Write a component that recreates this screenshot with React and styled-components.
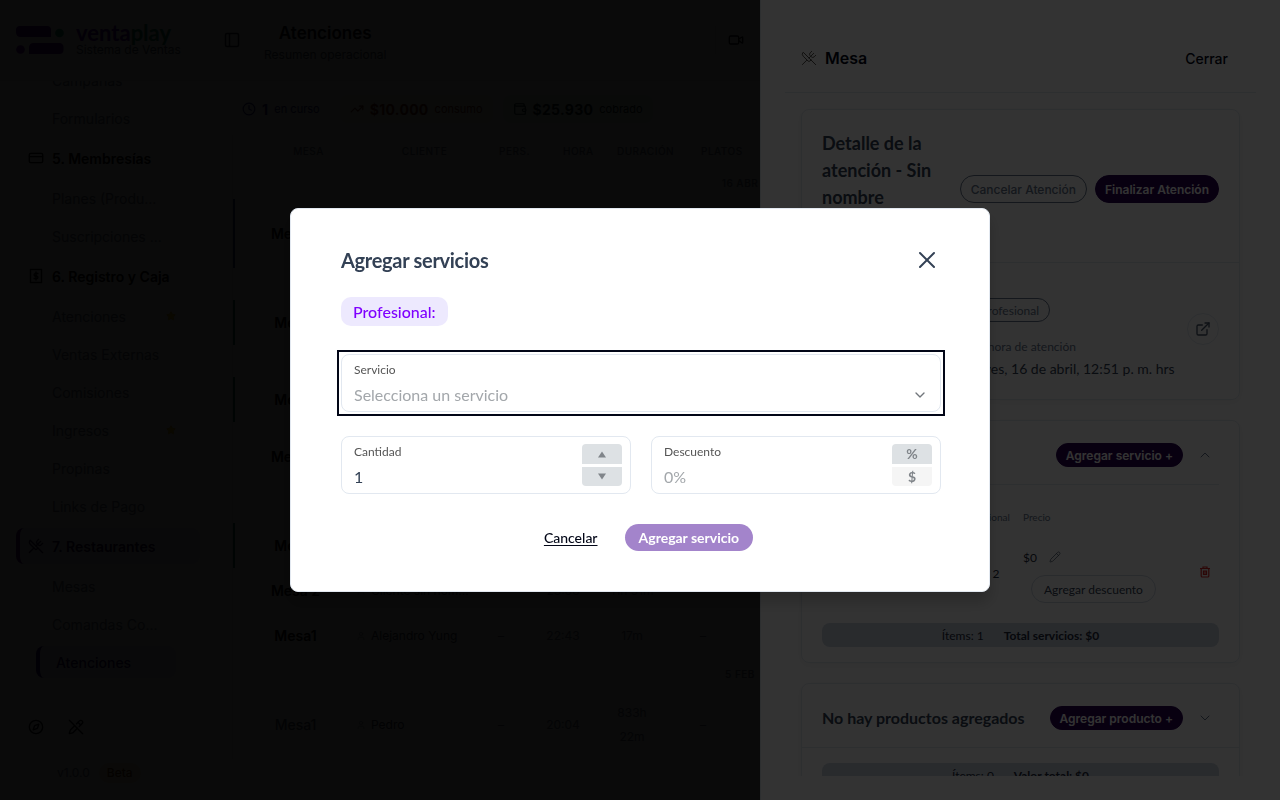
import React, { useState } from "react";
import styled, { createGlobalStyle } from "styled-components";
import {
  Calendar,
  ChevronDown,
  ChevronUp,
  Clock,
  Compass,
  CreditCard,
  ExternalLink,
  Pencil,
  PencilOff,
  Star,
  TrendingUp,
  User,
  UtensilsCrossed,
  Video,
  Wallet,
  X,
} from "lucide-react";

const GlobalStyle = createGlobalStyle`
  * {
    box-sizing: border-box;
  }
  body {
    margin: 0;
    overflow: hidden;
    background: #ffffff;
    color: #020617;
    font-family: "Inter", sans-serif;
    font-size: 14px;
  }
  h1, h2, h3, p, ul {
    margin: 0;
    padding: 0;
  }
  button, input, select {
    font-family: inherit;
    color: inherit;
    margin: 0;
  }
  svg {
    flex-shrink: 0;
  }
`;

/* ---------- page ---------- */

const Page = styled.div`
  display: grid;
  grid-template-rows: 81px minmax(0, 1fr);
  height: 100vh;
`;

const TopBar = styled.header`
  display: flex;
  align-items: center;
  border-bottom: 1px solid #e2e8f0;
  padding-left: 16px;
`;

const Brand = styled.a`
  display: flex;
  align-items: center;
  gap: 12px;
  width: 208px;
  color: inherit;
  text-decoration: none;
`;

const BrandName = styled.span`
  display: block;
  font-family: "Lato", sans-serif;
  font-size: 22px;
  line-height: 20px;
  font-weight: 700;
  color: ${(props) => props.color};
`;

const BrandRow = styled.span`
  display: flex;
`;

const Tagline = styled.small`
  display: block;
  font-size: 12px;
  line-height: 14px;
  color: #475569;
`;

const BareButton = styled.button`
  display: inline-flex;
  align-items: center;
  justify-content: center;
  padding: 0;
  border: 0;
  background: transparent;
`;

const PageHeading = styled.div`
  flex: 1;
  padding: 6px 0 0 24px;
`;

const HeadingBlock = styled.div`
  display: inline-block;
  text-align: center;
`;

const PageTitle = styled.h1`
  font-size: 17px;
  line-height: 24px;
  font-weight: 600;
`;

const PageSubtitle = styled.p`
  font-size: 12px;
  line-height: 20px;
  color: #475569;
`;

const TopActions = styled.div`
  display: flex;
  align-items: center;
  height: 28px;
  width: 565px;
  padding-left: 12px;
  border-left: 1px solid #e2e8f0;
`;

const Columns = styled.div`
  display: grid;
  grid-template-columns: 216px minmax(0, 1fr);
  min-height: 0;
`;

const Sidebar = styled.aside`
  display: flex;
  flex-direction: column;
  min-height: 0;
`;

const NavScroll = styled.nav`
  flex: 1;
  min-height: 0;
  overflow: hidden;
`;

const NavList = styled.ul`
  display: flex;
  flex-direction: column;
  gap: 6px;
  margin-top: -17px;
  padding: 0 16px;
  list-style: none;
`;

const NavGroup = styled.a`
  display: flex;
  align-items: center;
  gap: 8px;
  height: 36px;
  padding-left: ${(props) => (props.$active ? "8px" : "12px")};
  border-left: ${(props) => (props.$active ? "4px solid #4c0080" : "0")};
  border-radius: 8px;
  background: ${(props) => (props.$active ? "#f3f0fa" : "transparent")};
  color: ${(props) => (props.$active ? "#1e004d" : "#000000")};
  font-weight: 600;
  text-decoration: none;
`;

const NavLink = styled.a`
  display: flex;
  align-items: center;
  justify-content: space-between;
  height: 32px;
  margin: 0 24px 0 20px;
  padding-left: 16px;
  border-left: ${(props) => (props.$active ? "4px solid #1e0080" : "0")};
  border-radius: 8px;
  background: ${(props) => (props.$active ? "#f3f0fa" : "transparent")};
  color: ${(props) => (props.$active ? "#1e0070" : "#64748b")};
  font-weight: ${(props) => (props.$active ? 500 : 400)};
  text-decoration: none;
  white-space: nowrap;
`;

const SidebarTools = styled.div`
  display: flex;
  gap: 24px;
  padding: 0 28px;
`;

const Version = styled.div`
  display: flex;
  align-items: center;
  gap: 9px;
  padding: 28px 57px 17px;
  font-size: 12px;
  line-height: 20px;
  color: #64748b;
`;

const Beta = styled.span`
  padding: 0 8px;
  border-radius: 10px;
  background: #fef3c7;
  color: #78350f;
  font-weight: 500;
`;

const Main = styled.main`
  padding: 14px 34px 0 16px;
`;

const Chips = styled.div`
  display: flex;
  gap: 10px;
`;

const Chip = styled.div`
  display: flex;
  align-items: center;
  gap: 6px;
  height: 28px;
  padding: 0 10px;
  border-radius: 8px;
  background: ${(props) => props.$bg};
  color: ${(props) => props.$fg};
  font-size: 11px;

  strong {
    font-size: 14px;
    letter-spacing: 0.3px;
  }
`;

const Table = styled.table`
  width: 100%;
  border-collapse: collapse;
  table-layout: fixed;
  color: #64748b;
  font-size: 12px;
  line-height: 24px;
  text-align: center;

  th {
    height: 32px;
    padding: 0 0 0 27px;
    font-size: 10px;
    font-weight: 500;
    letter-spacing: 0.5px;
    white-space: nowrap;
    text-transform: uppercase;
    color: #64748b;
  }
  td {
    padding: 0;
  }
`;

const TableWrap = styled.div`
  margin-top: 12px;
  border-left: 1px solid #e2e8f0;
`;

const GroupRow = styled.tr`
  height: 32px;
  font-size: 10px;
  font-weight: 600;
  letter-spacing: 0.5px;
  color: #64748b;
`;

const Row = styled.tr`
  height: ${(props) => (props.$tall ? 69 : 45)}px;

  td:first-child {
    border-left: 2px solid ${(props) => props.$accent || "transparent"};
    color: ${(props) => (props.$muted ? "#475569" : "#000000")};
    font-size: 14px;
    font-weight: ${(props) => (props.$muted ? 500 : 600)};
  }
`;

const Client = styled.span`
  display: flex;
  align-items: center;
  gap: 5px;
  color: #334155;
  white-space: nowrap;

  svg {
    color: #94a3b8;
  }
`;

/* ---------- layers ---------- */

const Backdrop = styled.div`
  position: fixed;
  inset: 0;
  background: rgba(0, 0, 0, 0.8);
`;

const ModalLayer = styled(Backdrop)`
  display: flex;
  align-items: center;
  justify-content: center;
  font-family: "Lato", sans-serif;
`;

/* ---------- side panel ---------- */

const Panel = styled.section`
  position: fixed;
  top: 0;
  right: 0;
  bottom: 0;
  display: flex;
  flex-direction: column;
  width: 520px;
  max-width: 100%;
  padding: 24px;
  border-left: 1px solid #e2e8f0;
  background: #ffffff;
`;

const PanelHeader = styled.header`
  display: flex;
  align-items: center;
  justify-content: space-between;
  height: 69px;
  padding: 0 28px 0 16px;
  border-bottom: 1px solid #e2e8f0;
`;

const PanelTitle = styled.h2`
  display: flex;
  align-items: center;
  gap: 8px;
  font-size: 16px;
  font-weight: 600;

  svg {
    color: #57534e;
  }
`;

const CloseButton = styled(BareButton)`
  font-size: 14px;
  font-weight: 500;
`;

const PanelBody = styled.div`
  display: flex;
  flex: 1;
  flex-direction: column;
  gap: 20px;
  min-height: 0;
  overflow: hidden;
  padding: 16px 16px 0;
  font-family: "Lato", sans-serif;

  > * {
    flex-shrink: 0;
  }
`;

const Card = styled.article`
  border: 1px solid #e2e8f0;
  border-radius: 8px;
  box-shadow: 0 2px 8px rgba(0, 0, 0, 0.06);
`;

const DetailHead = styled.header`
  display: flex;
  align-items: center;
  gap: 8px;
  height: 153px;
  padding: 20px 20px 14px;
  border-bottom: 1px solid #e2e8f0;
`;

const DetailTitle = styled.h3`
  flex: 1;
  align-self: flex-start;
  font-size: 18px;
  line-height: 27px;
  font-weight: 700;
  color: #334155;
`;

const PillButton = styled.button`
  height: ${(props) => (props.$small ? 24 : 28)}px;
  padding: 0 ${(props) => (props.$outline ? 10 : 9)}px;
  border: 1px solid ${(props) => (props.$outline ? "#64748b" : "#2a0053")};
  border-radius: 14px;
  background: ${(props) => (props.$outline ? "transparent" : "#2a0053")};
  color: ${(props) => (props.$outline ? "#64748b" : "#ffffff")};
  font-family: "Inter", sans-serif;
  font-size: 12px;
  font-weight: ${(props) => (props.$outline ? 500 : 600)};
  white-space: nowrap;
`;

const DetailBody = styled.div`
  display: flex;
  align-items: center;
  justify-content: space-between;
  height: 136px;
  padding: 0 20px;
`;

const DetailFields = styled.div`
  display: grid;
  grid-template-columns: 123px auto;
  margin-top: 16px;
  color: #334155;
`;

const DetailLabel = styled.p`
  margin-top: 14px;
  font-size: 12px;
  line-height: 22px;
  color: #64748b;
`;

const DetailValue = styled.p`
  display: flex;
  align-items: center;
  gap: 4px;
  font-size: 14px;
  line-height: 22px;
`;

const Tag = styled.span`
  display: inline-flex;
  align-items: center;
  height: 24px;
  padding: 0 10px;
  border: 1px solid #64748b;
  border-radius: 12px;
  font-size: 12px;
  color: #64748b;
`;

const RoundLink = styled.a`
  display: flex;
  align-items: center;
  justify-content: center;
  width: 32px;
  height: 32px;
  margin-bottom: 4px;
  border: 1px solid #e2e8f0;
  border-radius: 50%;
  color: #475569;
`;

const SectionHead = styled.header`
  display: flex;
  align-items: center;
  justify-content: space-between;
  height: 64px;
  margin: ${(props) => (props.$inset ? "0 20px" : "0")};
  padding: ${(props) => (props.$inset ? "5px 0 0" : "5px 20px 0")};
  border-bottom: 1px solid #e2e8f0;
`;

const SectionTitle = styled.h3`
  font-size: 16px;
  line-height: 20px;
  font-weight: 700;
  color: #334155;
`;

const SectionActions = styled.div`
  display: flex;
  align-items: center;
  gap: 14px;
`;

const Toggle = styled(BareButton)`
  width: 16px;
  height: 16px;
  margin-right: 6px;
  color: #64748b;
`;

const ItemsTable = styled.table`
  width: calc(100% - 40px);
  margin: 18px 20px 0;
  border-collapse: collapse;
  table-layout: fixed;
  text-align: left;
  font-size: 12px;
  color: #1e293b;

  th {
    height: 28px;
    padding: 0;
    font-size: 10px;
    font-weight: 400;
    color: #64748b;
  }
  td {
    height: 84px;
    padding: 0;
  }
`;

const Price = styled.div`
  display: flex;
  align-items: center;
  gap: 12px;
  height: 36px;
  font-size: 12px;
`;

const DiscountButton = styled.button`
  display: block;
  height: 28px;
  margin: 0 0 4px 8px;
  padding: 0 12px;
  border: 1px solid #cbd5e1;
  border-radius: 14px;
  background: transparent;
  color: #334155;
  font-family: "Lato", sans-serif;
  font-size: 12px;
`;

const Totals = styled.footer`
  display: flex;
  align-items: center;
  justify-content: center;
  gap: 20px;
  height: 24px;
  margin: ${(props) => props.$top}px 20px 15px;
  border-radius: 8px;
  background: #cbd5e1;
  color: #1e293b;
  font-size: 12px;
`;

/* ---------- modal ---------- */

const Modal = styled.form`
  width: 700px;
  max-width: 100%;
  padding: 37px 48px 40px 50px;
  border: 1px solid #e2e8f0;
  border-radius: 8px;
  background: #ffffff;
  box-shadow: 0 10px 15px rgba(0, 0, 0, 0.2);
`;

const ModalHead = styled.header`
  display: flex;
  align-items: center;
  justify-content: space-between;
  height: 28px;
  color: #334155;
`;

const ModalTitle = styled.h2`
  font-size: 20px;
  line-height: 28px;
  font-weight: 700;
  letter-spacing: -0.3px;
`;

const Badge = styled.p`
  display: inline-block;
  margin: 23px 0 28px;
  padding: 0 12px;
  border-radius: 10px;
  background: #ede9fe;
  color: #7f00ff;
  font-size: 16px;
  font-weight: 500;
  line-height: 29px;
  vertical-align: top;
`;

const FocusFrame = styled.div`
  &:focus-within {
    outline: 2px solid #020617;
    outline-offset: 2px;
  }
`;

const Field = styled.div`
  display: flex;
  align-items: center;
  height: 58px;
  padding: 0 8px 0 12px;
  border: 1px solid #e2e8f0;
  border-radius: 8px;
`;

const FieldMain = styled.div`
  flex: 1;
  min-width: 0;
  padding-top: 6px;

  label {
    display: block;
    font-size: 12px;
    line-height: 16px;
    color: #555555;
  }
  input,
  select {
    display: block;
    width: 100%;
    height: 32px;
    padding: 0;
    border: 0;
    outline: 0;
    appearance: none;
    background: transparent;
    color: #334155;
    font-size: 16px;
  }
  select,
  input::placeholder {
    color: #a3a7ab;
    opacity: 1;
  }
`;

const SelectIcon = styled(ChevronDown)`
  align-self: flex-end;
  margin: 0 4px 8px;
  color: #71767b;
  pointer-events: none;
`;

const FieldRow = styled.div`
  display: grid;
  grid-template-columns: 1fr 1fr;
  gap: 20px;
  margin-top: 24px;
`;

const Switcher = styled.div`
  display: grid;
  grid-template-rows: 20px 19px;
  gap: 3px;
  width: 40px;
`;

const SwitchButton = styled.button`
  display: flex;
  align-items: center;
  justify-content: center;
  padding: 0;
  border: 0;
  background: ${(props) => (props.$off ? "#f5f5f5" : "#dde1e4")};
  color: #80858a;
  font-size: 14px;
  line-height: 18px;
  font-weight: 700;

  &:first-child {
    border-radius: 4px 4px 0 0;
  }
  &:last-child {
    border-radius: 0 0 4px 4px;
  }
`;

const ModalActions = styled.footer`
  display: flex;
  justify-content: center;
  gap: 27px;
  margin: 30px 0 0 15px;
`;

const CancelButton = styled(BareButton)`
  color: #020617;
  font-size: 14px;
  font-weight: 500;
  text-decoration: underline;
  text-underline-offset: 2px;
`;

const SubmitButton = styled.button`
  height: 27px;
  padding: 0 14px;
  border: 0;
  border-radius: 14px;
  background: #a384cb;
  color: #ffffff;
  font-size: 14px;
  font-weight: 700;
`;

const Logo = () => (
  <svg width="48" height="28" viewBox="0 0 48 28">
    <path d="M4 0h27q4 0 4 4v7H5q-5 0-5-5V4q0-4 4-4Z" fill="#4b0099" />
    <circle cx="43.5" cy="7" r="4.3" fill="#00a878" />
    <circle cx="4.5" cy="23.5" r="4.3" fill="#7500bd" />
    <path d="M18 17h25q4.500 0 4.500 4.500v2q0 4.500-4.500 4.500H13v-6q0-5 5-5Z" fill="#4b0099" />
  </svg>
);

const PanelIcon = () => (
  <svg width="16" height="16" viewBox="0 0 16 16" fill="none" stroke="#1e293b" strokeWidth="1.500">
    <rect x="1.500" y="1.500" width="13" height="13" rx="1.500" />
    <path d="M5.500 1.500v13" />
  </svg>
);

const CashIcon = () => (
  <svg width="16" height="16" viewBox="0 0 16 16" fill="none" stroke="currentColor" strokeWidth="1.300">
    <rect x="2.500" y="1.500" width="11" height="13" />
    <path d="M8 3.500v9M10.500 5.500H7a1.300 1.300 0 0 0 0 2.500h2a1.300 1.300 0 0 1 0 2.500H5.500" />
  </svg>
);

const TrashIcon = () => (
  <svg width="12" height="12" viewBox="0 0 12 12" fill="none" stroke="#dc2626" strokeWidth="1.200">
    <path d="M1 2.500h10M4 2.500V1h4v1.500M2.200 2.500v7.500q0 1 1 1h5.600q1 0 1-1V2.500" />
    <path d="M4.500 5h3v3.500h-3Z" fill="#dc2626" fillOpacity="0.5" />
  </svg>
);

const Triangle = ({ down }) => (
  <svg width="8" height="7" viewBox="0 0 8 7">
    <path d={down ? "M0 0.500h8L4 6.500Z" : "M0 6.500h8L4 0.500Z"} fill="#80858a" />
  </svg>
);

const navItems = [
  { text: "Campañas" },
  { text: "Formularios" },
  { text: "5. Membresías", icon: <CreditCard size={16} /> },
  { text: "Planes (Produ..." },
  { text: "Suscripciones ..." },
  { text: "6. Registro y Caja", icon: <CashIcon /> },
  { text: "Atenciones", star: true },
  { text: "Ventas Externas" },
  { text: "Comisiones" },
  { text: "Ingresos", star: true },
  { text: "Propinas" },
  { text: "Links de Pago" },
  { text: "7. Restaurantes", icon: <UtensilsCrossed size={16} />, active: true },
  { text: "Mesas" },
  { text: "Comandas Co..." },
  { text: "Atenciones", active: true },
];

const GREEN = "#047857";

const rows = [
  { group: "16 ABR" },
  { mesa: "Mesa 2", client: "Cliente sin nom...", time: "12:51", length: "5m", accent: "#1e3a8a", tall: true },
  { group: "10 ABR" },
  { mesa: "Mesa1", client: "Alejandro Yung", time: "21:10", length: "35m", accent: GREEN },
  { group: "2 ABR" },
  { mesa: "Mesa1", client: "Pedro", time: "20:32", length: "42m", accent: GREEN },
  { mesa: "Mesa 2", client: "Cliente sin nom...", time: "19:15", length: "1h 10m", tall: true },
  { group: "12 MAR" },
  { mesa: "Mesa1", client: "Alejandro Yung", time: "23:20", length: "12m", accent: GREEN },
  { mesa: "Mesa 2", client: "Cliente sin nom...", time: "23:08", length: "11h 51m" },
  { mesa: "Mesa1", client: "Alejandro Yung", time: "22:43", length: "17m" },
  { group: "5 FEB" },
  { mesa: "Mesa1", client: "Pedro", time: "20:04", length: "833h 22m", tall: true, muted: true },
];

const VisitsTable = () => (
  <TableWrap>
    <Table>
      <colgroup>
        <col width="122" />
        <col width="110" />
        <col width="70" />
        <col width="54" />
        <col width="84" />
        <col width="58" />
        <col />
      </colgroup>
      <thead>
        <tr>
          {["Mesa", "Cliente", "Pers.", "Hora", "Duración", "Platos"].map((name) => (
            <th key={name}>{name}</th>
          ))}
          <th />
        </tr>
      </thead>
      <tbody>
        {rows.map((row, i) =>
          row.group ? (
            <GroupRow key={i}>
              <td colSpan="7">{row.group}</td>
            </GroupRow>
          ) : (
            <Row key={i} $accent={row.accent} $tall={row.tall} $muted={row.muted}>
              <td>{row.mesa}</td>
              <td>
                <Client>
                  <User size={10} />
                  {row.client}
                </Client>
              </td>
              <td>–</td>
              <td>{row.time}</td>
              <td>
                {row.length === "833h 22m" ? (
                  <>
                    833h
                    <br />
                    22m
                  </>
                ) : (
                  row.length
                )}
              </td>
              <td>–</td>
              <td />
            </Row>
          )
        )}
      </tbody>
    </Table>
  </TableWrap>
);

const Dashboard = () => (
  <Page>
    <TopBar>
      <Brand href="#">
        <Logo />
        <span>
          <BrandRow>
            <BrandName color="#5b00b3">venta</BrandName>
            <BrandName color="#00875f">play</BrandName>
          </BrandRow>
          <Tagline>Sistema de Ventas</Tagline>
        </span>
      </Brand>
      <BareButton type="button" aria-label="Menú">
        <PanelIcon />
      </BareButton>
      <PageHeading>
        <HeadingBlock>
          <PageTitle>Atenciones</PageTitle>
          <PageSubtitle>Resumen operacional</PageSubtitle>
        </HeadingBlock>
      </PageHeading>
      <TopActions>
        <BareButton type="button" aria-label="Video">
          <Video size={16} />
        </BareButton>
      </TopActions>
    </TopBar>
    <Columns>
      <Sidebar>
        <NavScroll>
          <NavList>
            {navItems.map((item, i) => (
              <li key={i}>
                {item.icon ? (
                  <NavGroup href="#" $active={item.active}>
                    {item.icon}
                    {item.text}
                  </NavGroup>
                ) : (
                  <NavLink href="#" $active={item.active}>
                    {item.text}
                    {item.star && <Star size={10} fill="#facc15" color="#eab308" />}
                  </NavLink>
                )}
              </li>
            ))}
          </NavList>
        </NavScroll>
        <SidebarTools>
          <Compass size={16} />
          <PencilOff size={16} />
        </SidebarTools>
        <Version>
          v1.0.0 <Beta>Beta</Beta>
        </Version>
      </Sidebar>
      <Main>
        <Chips>
          <Chip $bg="#fafcff" $fg="#1e1b8a">
            <Clock size={14} />
            <strong>1</strong> en curso
          </Chip>
          <Chip $bg="#fffbeb" $fg="#7c2d12">
            <TrendingUp size={14} />
            <strong>$10.000</strong> consumo
          </Chip>
          <Chip $bg="#ecfdf5" $fg="#022c22">
            <Wallet size={14} />
            <strong>$25.930</strong> cobrado
          </Chip>
        </Chips>
        <VisitsTable />
      </Main>
    </Columns>
  </Page>
);

const MesaPanel = () => (
  <Panel>
    <PanelHeader>
      <PanelTitle>
        <UtensilsCrossed size={16} strokeWidth={1.5} />
        Mesa
      </PanelTitle>
      <CloseButton type="button">Cerrar</CloseButton>
    </PanelHeader>
    <PanelBody>
      <Card>
        <DetailHead>
          <DetailTitle>Detalle de la atención - Sin nombre</DetailTitle>
          <PillButton $outline>Cancelar Atención</PillButton>
          <PillButton>Finalizar Atención</PillButton>
        </DetailHead>
        <DetailBody>
          <DetailFields>
            <div>
              <Tag>Cliente</Tag>
              <DetailLabel>Mesa</DetailLabel>
              <DetailValue>Mesa 2</DetailValue>
            </div>
            <div>
              <Tag>Con Profesional</Tag>
              <DetailLabel>Fecha y hora de atención</DetailLabel>
              <DetailValue>
                <Calendar size={14} />
                Jueves, 16 de abril, 12:51 p. m. hrs
              </DetailValue>
            </div>
          </DetailFields>
          <RoundLink href="#" aria-label="Abrir atención">
            <ExternalLink size={16} />
          </RoundLink>
        </DetailBody>
      </Card>
      <Card>
        <SectionHead $inset>
          <SectionTitle>Servicios</SectionTitle>
          <SectionActions>
            <PillButton $small>Agregar servicio +</PillButton>
            <Toggle type="button" aria-label="Contraer">
              <ChevronUp size={16} strokeWidth={1.5} />
            </Toggle>
          </SectionActions>
        </SectionHead>
        <ItemsTable>
          <colgroup>
            <col />
            <col width="62" />
            <col width="176" />
            <col width="20" />
          </colgroup>
          <thead>
            <tr>
              <th>Servicio</th>
              <th>Profesional</th>
              <th>Precio</th>
              <th />
            </tr>
          </thead>
          <tbody>
            <tr>
              <td>Servicio</td>
              <td>Mesa 2</td>
              <td>
                <Price>
                  $0 <Pencil size={12} strokeWidth={1.5} color="#475569" />
                </Price>
                <DiscountButton>Agregar descuento</DiscountButton>
              </td>
              <td>
                <BareButton type="button" aria-label="Eliminar">
                  <TrashIcon />
                </BareButton>
              </td>
            </tr>
          </tbody>
        </ItemsTable>
        <Totals $top={8}>
          Ítems: 1 <strong>Total servicios: $0</strong>
        </Totals>
      </Card>
      <Card>
        <SectionHead>
          <SectionTitle>No hay productos agregados</SectionTitle>
          <SectionActions>
            <PillButton $small>Agregar producto +</PillButton>
            <Toggle type="button" aria-label="Expandir">
              <ChevronDown size={16} strokeWidth={1.5} />
            </Toggle>
          </SectionActions>
        </SectionHead>
        <Totals $top={15}>
          Ítems: 0 <strong>Valor total: $0</strong>
        </Totals>
      </Card>
    </PanelBody>
  </Panel>
);

const ServiceModal = () => {
  const [amount, setAmount] = useState(1);
  const [unit, setUnit] = useState("%");
  const [discount, setDiscount] = useState("");

  return (
    <Modal onSubmit={(e) => e.preventDefault()}>
      <ModalHead>
        <ModalTitle>Agregar servicios</ModalTitle>
        <BareButton type="button" aria-label="Cerrar">
          <X size={28} strokeWidth={1.7} />
        </BareButton>
      </ModalHead>
      <Badge>Profesional:</Badge>
      <FocusFrame>
        <Field>
          <FieldMain>
            <label htmlFor="service">Servicio</label>
            <select id="service" autoFocus>
              <option>Selecciona un servicio</option>
            </select>
          </FieldMain>
          <SelectIcon size={16} />
        </Field>
      </FocusFrame>
      <FieldRow>
        <Field>
          <FieldMain>
            <label htmlFor="amount">Cantidad</label>
            <input id="amount" value={amount} onChange={(e) => setAmount(Number(e.target.value) || 1)} />
          </FieldMain>
          <Switcher>
            <SwitchButton type="button" aria-label="Más" onClick={() => setAmount(amount + 1)}>
              <Triangle />
            </SwitchButton>
            <SwitchButton type="button" aria-label="Menos" onClick={() => setAmount(Math.max(1, amount - 1))}>
              <Triangle down />
            </SwitchButton>
          </Switcher>
        </Field>
        <Field>
          <FieldMain>
            <label htmlFor="discount">Descuento</label>
            <input
              id="discount"
              placeholder={unit === "%" ? "0%" : "$0"}
              value={discount}
              onChange={(e) => setDiscount(e.target.value)}
            />
          </FieldMain>
          <Switcher>
            <SwitchButton type="button" $off={unit !== "%"} onClick={() => setUnit("%")}>
              %
            </SwitchButton>
            <SwitchButton type="button" $off={unit !== "$"} onClick={() => setUnit("$")}>
              $
            </SwitchButton>
          </Switcher>
        </Field>
      </FieldRow>
      <ModalActions>
        <CancelButton type="button">Cancelar</CancelButton>
        <SubmitButton>Agregar servicio</SubmitButton>
      </ModalActions>
    </Modal>
  );
};

const App = () => (
  <>
    <GlobalStyle />
    <Dashboard />
    <Backdrop />
    <MesaPanel />
    <ModalLayer>
      <ServiceModal />
    </ModalLayer>
  </>
);

export default App;
